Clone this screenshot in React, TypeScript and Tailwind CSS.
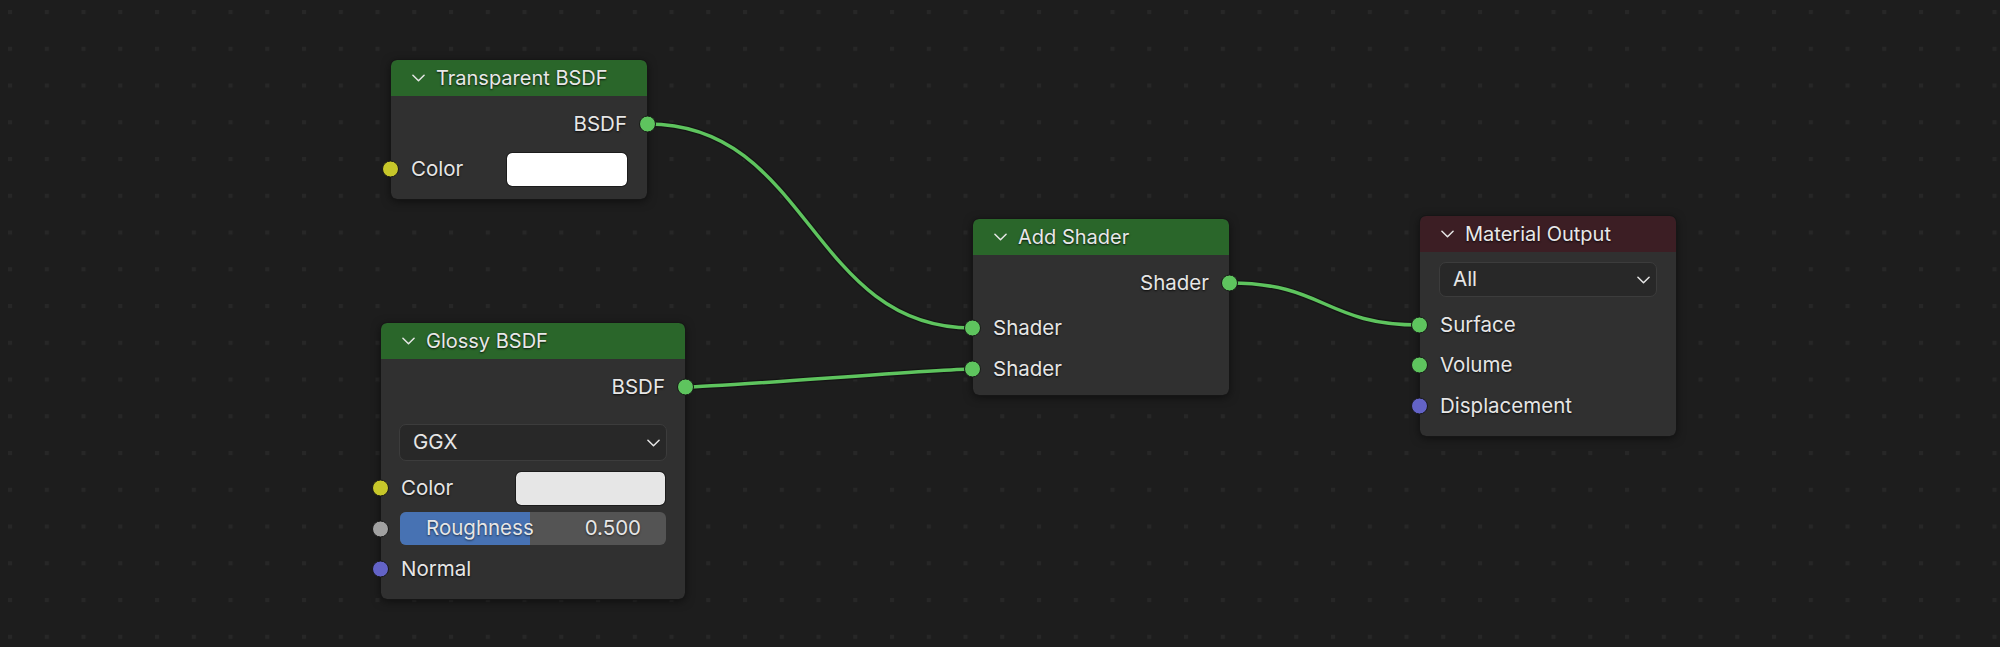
import * as React from "react"

const font = { fontFamily: "Inter, 'Noto Sans', 'DejaVu Sans', sans-serif" }

function Socket({ side, color }: { side: "left" | "right"; color: string }) {
  return (
    <span
      className={`absolute top-1/2 -translate-y-1/2 w-[17px] h-[17px] rounded-full border-[1.5px] border-[#161616] ${color} ${side === "left" ? "left-[-9px]" : "right-[-9px]"}`}
    />
  )
}

function Chevron({ className }: { className?: string }) {
  return (
    <svg viewBox="0 0 14 8" className={className} fill="none">
      <polyline points="1,1 7,7 13,1" stroke="currentColor" strokeWidth="1.6" strokeLinecap="round" strokeLinejoin="round" />
    </svg>
  )
}

function Node({ x, y, w, title, header, children }: { x: number; y: number; w: number; title: string; header: string; children: React.ReactNode }) {
  return (
    <div
      className="absolute rounded-[6px] bg-[#303030] shadow-[0_2px_10px_rgba(0,0,0,0.55)] outline outline-1 outline-[#161616]"
      style={{ left: x, top: y, width: w }}
    >
      <div className={`h-[36px] flex items-center rounded-t-[6px] pl-[21px] gap-[11px] ${header}`}>
        <Chevron className="w-[13px] h-[8px] text-[#e6e6e6]" />
        <span className="text-[20px] text-[#e8e8e8] [text-shadow:0_1px_2px_rgba(0,0,0,0.8)]">{title}</span>
      </div>
      {children}
    </div>
  )
}

function Row({ label, side, sock, h = "h-[40px]", extra, children }: { label?: string; side: "left" | "right"; sock: string; h?: string; extra?: string; children?: React.ReactNode }) {
  return (
    <div className={`relative flex items-center px-[20px] ${h} ${extra ?? ""} ${side === "right" ? "justify-end" : "justify-between"}`}>
      {label && <span className="text-[20.5px] text-[#e6e6e6] [text-shadow:0_1px_2px_rgba(0,0,0,0.8)]">{label}</span>}
      {children}
      <Socket side={side} color={sock} />
    </div>
  )
}

function Dropdown({ value, extra }: { value: string; extra: string }) {
  return (
    <div className={`flex items-center justify-between rounded-[7px] bg-[#282828] border-[1.5px] border-[#3c3c3c] pl-[13px] pr-[6px] ${extra}`}>
      <span className="text-[20.5px] text-[#e6e6e6]">{value}</span>
      <Chevron className="w-[13px] h-[8px] text-[#e6e6e6]" />
    </div>
  )
}

export default function App() {
  const wire = (d: string) => (
    <g key={d}>
      <path d={d} stroke="#141414" strokeWidth="6" fill="none" />
      <path d={d} stroke="#5ec45e" strokeWidth="3.5" fill="none" />
    </g>
  )

  return (
    <div className="relative w-[2000px] h-[647px] overflow-hidden bg-[#1d1d1d]" style={font}>
      <svg className="absolute inset-0" width="2000" height="647">
        <defs>
          <pattern id="dots" x="8" y="10" width="36.75" height="36.75" patternUnits="userSpaceOnUse">
            <rect x="0" y="0" width="4" height="4" fill="#272727" />
          </pattern>
        </defs>
        <rect width="2000" height="647" fill="url(#dots)" />
        {wire("M648,124 C810,124 810,328 972,328")}
        {wire("M686,387 C720,387 938,369 972,369")}
        {wire("M1230,283 C1325,283 1325,325 1420,325")}
      </svg>

      <Node x={391} y={60} w={256} title="Transparent BSDF" header="bg-[#2a662a]">
        <div className="pt-[8px] pb-[10px] flex flex-col gap-[5px]">
          <Row label="BSDF" side="right" sock="bg-[#5ec45e]" />
          <Row label="Color" side="left" sock="bg-[#c7c72a]">
            <div className="w-[120px] h-[33px] rounded-[5px] bg-white outline outline-1 outline-[#1c1c1c]" />
          </Row>
        </div>
      </Node>

      <Node x={381} y={323} w={304} title="Glossy BSDF" header="bg-[#2a662a]">
        <div className="pt-[8px] pb-[10px] flex flex-col">
          <Row label="BSDF" side="right" sock="bg-[#5ec45e]" />
          <div className="px-[18px] mt-[17px]">
            <Dropdown value="GGX" extra="h-[37px]" />
          </div>
          <Row label="Color" side="left" sock="bg-[#c7c72a]" extra="mt-[7px]">
            <div className="w-[149px] h-[33px] rounded-[5px] bg-[#e6e6e6] outline outline-1 outline-[#1c1c1c]" />
          </Row>
          <div className="relative h-[41px] flex items-center pl-[19px] pr-[19px]">
            <div className="relative flex-1 h-[33px] rounded-[6px] bg-[#545454] overflow-hidden flex items-center justify-between pl-[26px] pr-[25px]">
              <div className="absolute left-0 top-0 bottom-0 w-[130px] bg-[#4772b3]" />
              <span className="relative text-[20.5px] text-[#e6e6e6] [text-shadow:0_1px_2px_rgba(0,0,0,0.6)]">Roughness</span>
              <span className="relative text-[20.5px] text-[#e6e6e6] [text-shadow:0_1px_2px_rgba(0,0,0,0.6)]">0.500</span>
            </div>
            <Socket side="left" color="bg-[#a1a1a1]" />
          </div>
          <Row label="Normal" side="left" sock="bg-[#6363c7]" />
        </div>
      </Node>

      <Node x={973} y={219} w={256} title="Add Shader" header="bg-[#2a662a]">
        <div className="pt-[8px] pb-[6px] flex flex-col">
          <Row label="Shader" side="right" sock="bg-[#5ec45e]" />
          <Row label="Shader" side="left" sock="bg-[#5ec45e]" extra="mt-[5px]" />
          <Row label="Shader" side="left" sock="bg-[#5ec45e]" extra="mt-[1px]" />
        </div>
      </Node>

      <Node x={1420} y={216} w={256} title="Material Output" header="bg-[#3c1e24]">
        <div className="pt-[10px] pb-[10px] flex flex-col">
          <div className="px-[19px]">
            <Dropdown value="All" extra="h-[35px]" />
          </div>
          <Row label="Surface" side="left" sock="bg-[#5ec45e]" extra="mt-[8px]" />
          <Row label="Volume" side="left" sock="bg-[#5ec45e]" />
          <Row label="Displacement" side="left" sock="bg-[#6363c7]" extra="mt-[1px]" />
        </div>
      </Node>
    </div>
  )
}
